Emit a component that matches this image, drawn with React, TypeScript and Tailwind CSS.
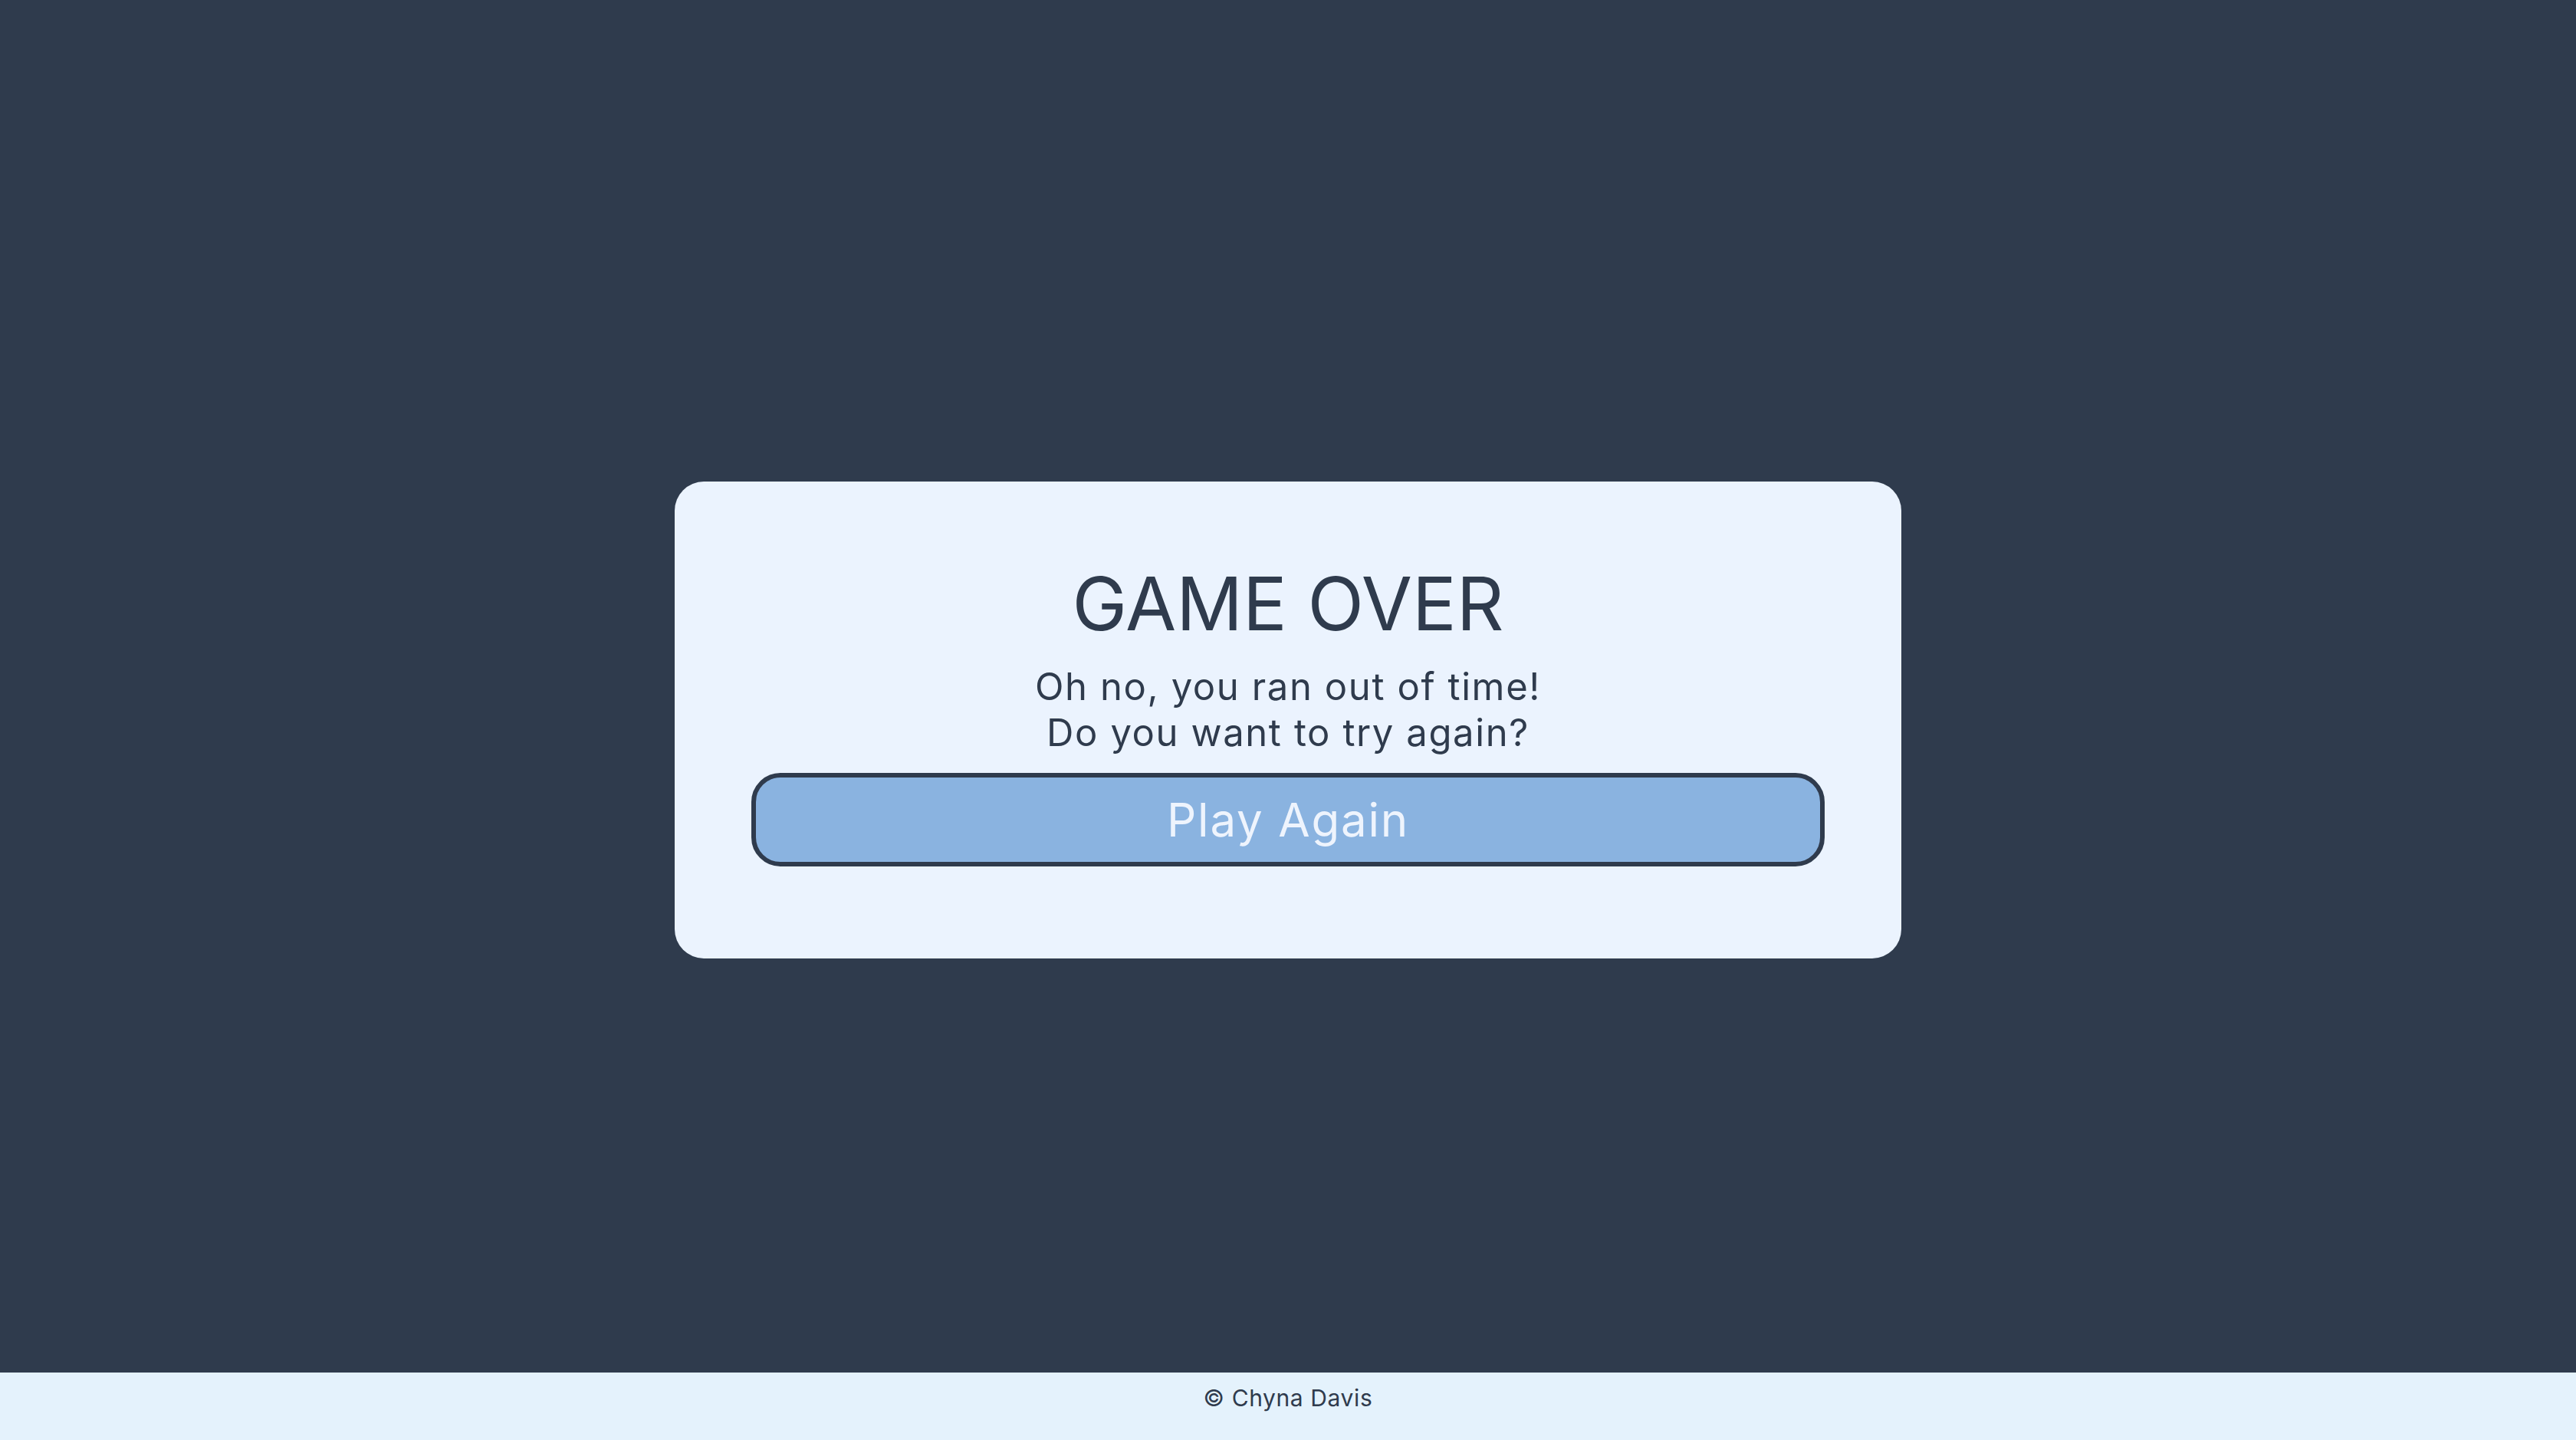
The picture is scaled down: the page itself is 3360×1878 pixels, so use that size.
import React from 'react'

function GameOver() {
  return (
    <div className="w-[1600px] bg-[#ebf3fe] rounded-[38px] pt-[111px] pb-[120px] px-[100px] flex flex-col items-center text-[#2f3b4d]">
      <h1 className="text-[96px] leading-none font-normal">GAME OVER</h1>
      <p className="mt-[31px] text-[49px] leading-[60px] tracking-[1.6px] text-center">
        Oh no, you ran out of time!
        <br />
        Do you want to try again?
      </p>
      <button className="mt-[22px] w-full h-[122px] rounded-[38px] border-[6px] border-[#2f3b4d] bg-[#8ab3e0] text-[#eef4fd] text-[60px] leading-none tracking-[1.8px]">
        Play Again
      </button>
    </div>
  )
}

export default function App() {
  return (
    <div className="h-screen flex flex-col bg-[#2f3b4d] font-['Inter',sans-serif]">
      <main className="flex-1 flex items-center justify-center pt-[88px]">
        <GameOver />
      </main>
      <footer className="h-[88px] bg-[#e4f2fc] flex justify-center pt-[11px] text-[30px] leading-[45px] tracking-[0.6px] text-[#2f3b4d]">
        © Chyna Davis
      </footer>
    </div>
  )
}
